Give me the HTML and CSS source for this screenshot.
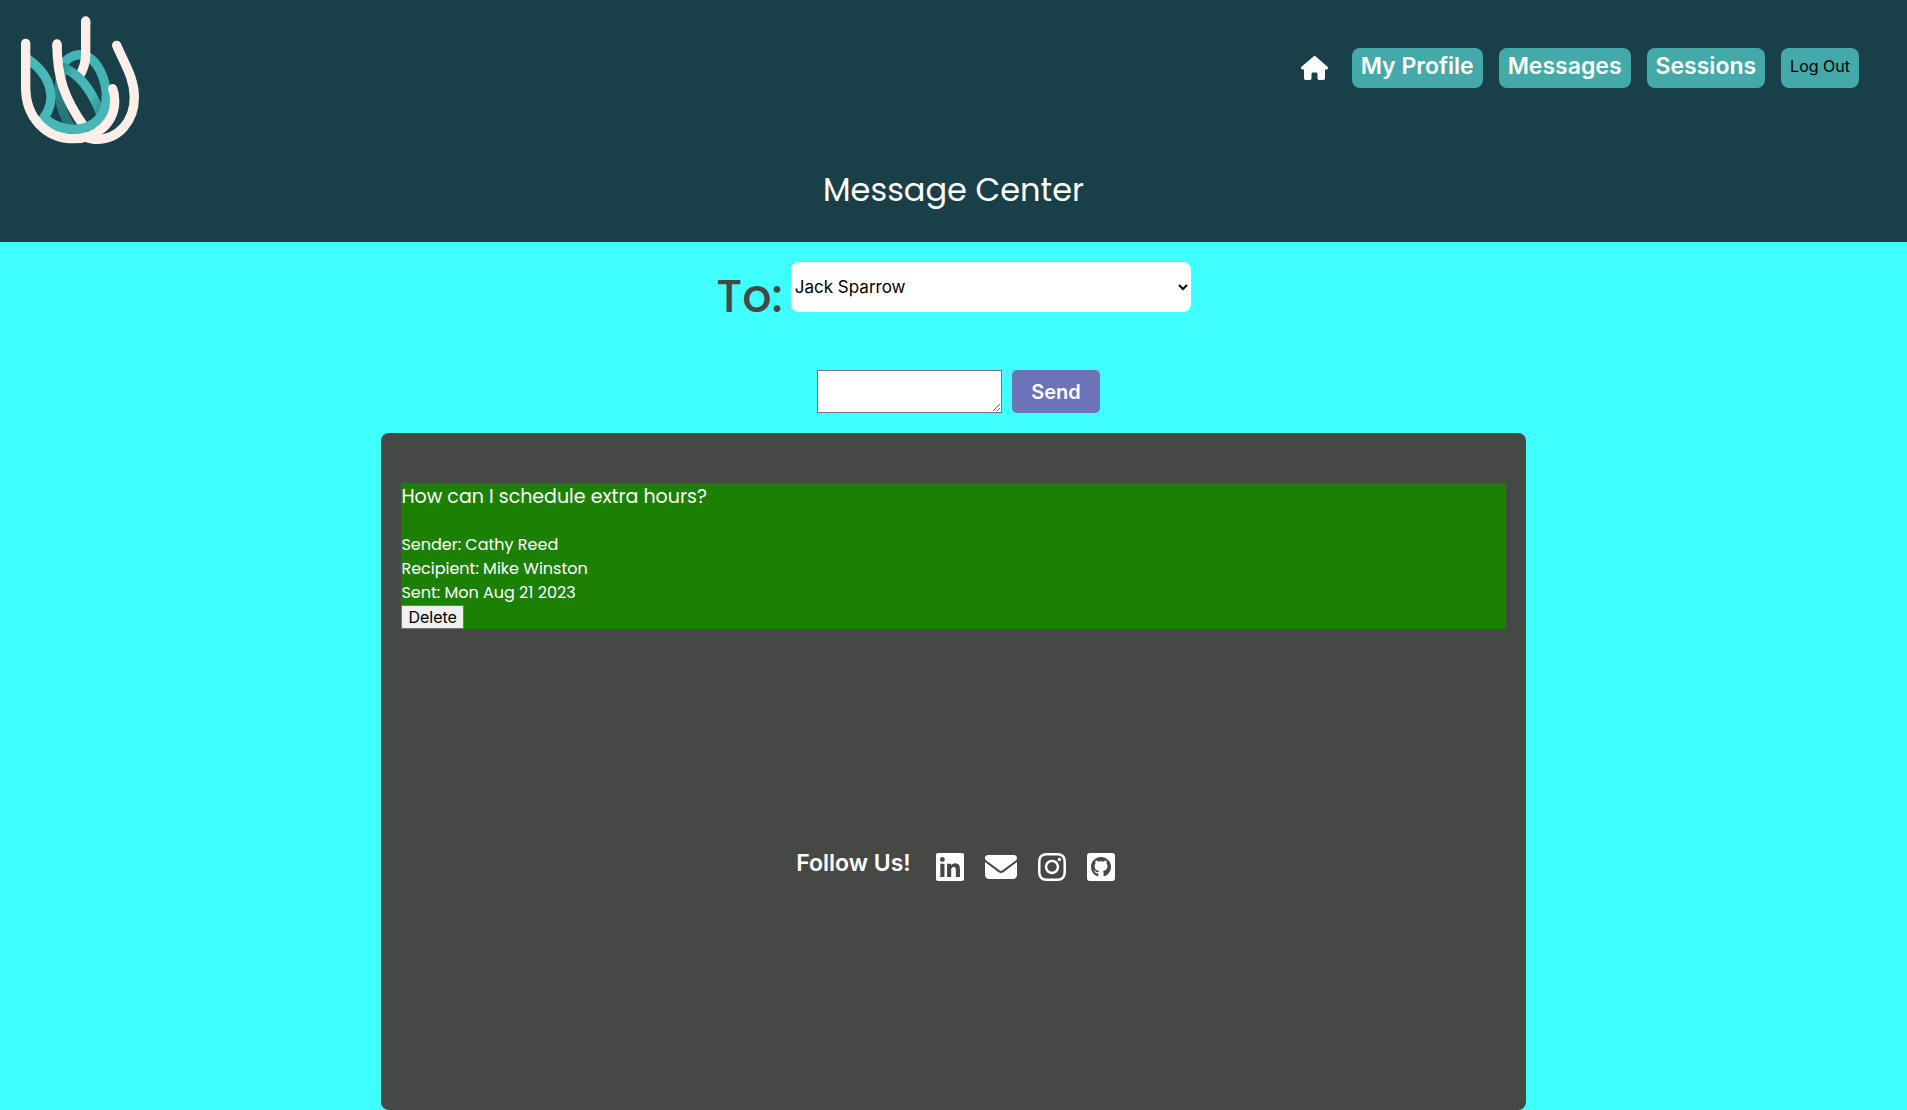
FILE: index.html
```html
<!DOCTYPE html>
<html lang="en">
<head>
<meta charset="utf-8">
<meta name="viewport" content="width=device-width, initial-scale=1">
<title>Message Center</title>
<link rel="stylesheet" href="styles.css">
</head>
<body>
<header class="header">
  <div class="topbar">
    <a href="#" class="logo" aria-label="Home page">
      <svg viewBox="0 0 480 480" fill="none" stroke-width="28">
        <defs>
          <linearGradient id="strand" x1="0" y1="0" x2="1" y2="1">
            <stop offset="0" stop-color="#2f8f92"/>
            <stop offset="0.25" stop-color="#44b5b5"/>
            <stop offset="0.7" stop-color="#46b8b7"/>
            <stop offset="1" stop-color="#2f8c90"/>
          </linearGradient>
          <linearGradient id="inner" x1="0" y1="0" x2="0" y2="1">
            <stop offset="0" stop-color="#3fa9aa"/>
            <stop offset="0.5" stop-color="#2b8085"/>
            <stop offset="1" stop-color="#257076"/>
          </linearGradient>
        </defs>
        <path d="M196 190C168 250 172 325 214 382" stroke="url(#inner)"/>
        <path d="M82 176C128 208 152 245 153 292C153 320 142 345 116 370" stroke="#47b8b7"/>
        <path d="M182 206C198 168 240 152 272 176C302 200 321 250 319 298" stroke="#44b3b3"/>
        <path d="M257 63V162C257 190 252 206 238 228" stroke="#fdefe8"/>
        <path d="M257 63V70M171 132V140" stroke="#fdefe8" stroke-linecap="round"/>
        <path d="M184 200C238 220 276 272 302 342" stroke="url(#strand)"/>
        <path d="M171 132C171 228 191 294 254 382" stroke="#fdefe8"/>
        <path d="M319 290C319 350 280 387 222 388C184 388 156 374 130 352" stroke="#46b7b6"/>
        <path d="M77 130V262C77 350 135 416 222 416C292 416 344 366 344 302C344 288 342 276 338 266" stroke="#fdefe8" stroke-linecap="round"/>
        <path d="M350 136C372 190 403 232 403 292C403 365 354 418 292 418C280 418 268 416 258 411" stroke="#fdefe8" stroke-linecap="round"/>
      </svg>
    </a>
    <nav class="nav" aria-label="Main">
      <a href="#" class="home" aria-label="Home">
        <svg viewBox="0 0 576 512" fill="currentColor"><path d="M575.800 255.500c0 18-15 32.100-32 32.100h-32l.7 160.200c0 2.700-.2 5.400-.5 8.100V472c0 22.100-17.900 40-40 40H392c-22.100 0-40-17.900-40-40V384c0-17.700-14.300-32-32-32H256c-17.700 0-32 14.300-32 32v88c0 22.100-17.900 40-40 40H104c-22.100 0-40-17.900-40-40V287.600H32c-18 0-32-14-32-32.100c0-9 3-17 10-24L266.400 8c7-7 15-8 22-8s15 2 21 7L564.800 231.500c8 7 12 15 11 24z"/></svg>
      </a>
      <a href="#" class="pill">My Profile</a>
      <a href="#" class="pill">Messages</a>
      <a href="#" class="pill">Sessions</a>
      <button type="button" class="pill pill-plain">Log Out</button>
    </nav>
  </div>
  <h1 class="title">Message Center</h1>
</header>
<main class="main">
  <form class="compose">
    <div class="row">
      <label for="to" class="to">To:</label>
      <select id="to" class="recipient"><option>Jack Sparrow</option></select>
    </div>
    <div class="row row-message">
      <textarea class="message-box" aria-label="Message"></textarea>
      <button type="button" class="send">Send</button>
    </div>
  </form>
  <section class="panel">
    <article class="message">
      <h2 class="message-text">How can I schedule extra hours?</h2>
      <p class="meta">Sender: Cathy Reed</p>
      <p class="meta">Recipient: Mike Winston</p>
      <p class="meta">Sent: Mon Aug 21 2023</p>
      <button type="button" class="delete">Delete</button>
    </article>
    <footer class="footer">
      <p class="follow">Follow Us!</p>
      <a href="#" class="social" aria-label="LinkedIn"><svg viewBox="0 0 448 512" fill="currentColor"><path d="M416 32H31.900C14.300 32 0 46.500 0 64.300v383.400C0 465.500 14.300 480 31.900 480H416c17.600 0 32-14.500 32-32.300V64.300c0-17.800-14.400-32.300-32-32.300zM135.400 416H69V202.200h66.500V416zm-33.200-243c-21.300 0-38.500-17.300-38.500-38.500S80.900 96 102.200 96c21.200 0 38.500 17.300 38.500 38.500 0 21.300-17.200 38.500-38.500 38.500zm282.100 243h-66.400V312c0-24.800-.5-56.700-34.500-56.700-34.600 0-39.900 27-39.900 54.900V416h-66.400V202.200h63.700v29.200h.9c8.900-16.800 30.600-34.500 62.900-34.500 67.200 0 79.700 44.300 79.700 101.900V416z"/></svg></a>
      <a href="#" class="social" aria-label="Email"><svg viewBox="0 0 512 512" fill="currentColor"><path d="M48 64C21.500 64 0 85.500 0 112c0 15.100 7.100 29.300 19.200 38.400L236.800 313.600c11.400 8.500 27 8.500 38.400 0L492.800 150.400c12.100-9.100 19.200-23.300 19.200-38.400c0-26.500-21.500-48-48-48H48zM0 176V384c0 35.300 28.700 64 64 64H448c35.300 0 64-28.700 64-64V176L294.400 339.200c-22.800 17.100-54 17.100-76.800 0L0 176z"/></svg></a>
      <a href="#" class="social" aria-label="Instagram"><svg viewBox="0 0 448 512" fill="currentColor"><path d="M224.100 141c-63.600 0-114.900 51.300-114.900 114.900s51.300 114.900 114.900 114.900S339 319.500 339 255.900 287.700 141 224.100 141zm0 189.600c-41.100 0-74.700-33.500-74.700-74.700s33.500-74.700 74.700-74.700 74.700 33.500 74.700 74.700-33.600 74.700-74.700 74.700zm146.400-194.300c0 14.900-12 26.800-26.800 26.800-14.900 0-26.800-12-26.800-26.800s12-26.800 26.800-26.800 26.800 12 26.800 26.800zm76.100 27.200c-1.700-35.900-9.900-67.700-36.200-93.900-26.200-26.200-58-34.400-93.900-36.200-37-2.100-147.900-2.100-184.900 0-35.800 1.700-67.600 9.900-93.900 36.100s-34.400 58-36.200 93.900c-2.100 37-2.100 147.900 0 184.900 1.700 35.900 9.900 67.700 36.200 93.900s58 34.400 93.900 36.200c37 2.100 147.900 2.100 184.900 0 35.900-1.700 67.700-9.900 93.900-36.200 26.200-26.200 34.400-58 36.200-93.900 2.100-37 2.100-147.800 0-184.800zM398.800 388c-7.800 19.600-22.900 34.700-42.600 42.600-29.500 11.700-99.500 9-132.100 9s-102.700 2.600-132.100-9c-19.600-7.800-34.700-22.900-42.600-42.600-11.700-29.500-9-99.500-9-132.100s-2.600-102.700 9-132.100c7.800-19.600 22.900-34.700 42.600-42.600 29.500-11.700 99.500-9 132.100-9s102.700-2.600 132.100 9c19.600 7.800 34.700 22.900 42.600 42.600 11.700 29.500 9 99.500 9 132.100s2.700 102.700-9 132.100z"/></svg></a>
      <a href="#" class="social" aria-label="GitHub"><svg viewBox="0 0 448 512"><rect y="32" width="448" height="448" rx="48" fill="currentColor"/><path fill="#464846" d="M224 96c-89 0-160 70-160 158 0 70 45 129 108 151 8 1 11-4 11-8v-38c-44 9-54-19-54-19-7-18-18-23-18-23-14-10 1-10 1-10 16 1 25 17 25 17 14 24 37 17 47 13 1-10 5-17 10-21-36-4-73-18-73-78 0-17 6-31 16-42-2-4-7-20 2-42 0 0 13-4 44 16 26-7 56-7 82 0 31-20 44-16 44-16 9 22 4 38 2 42 10 11 16 25 16 42 0 60-37 74-73 78 6 5 11 15 11 30v51c0 4 3 9 11 8 63-22 108-81 108-151 0-88-71-158-160-158z"/></svg></a>
    </footer>
  </section>
</main>
</body>
</html>
```
FILE: styles.css
```css
* {
  box-sizing: border-box;
}

body {
  margin: 0;
  min-height: 100vh;
  display: flex;
  flex-direction: column;
  background: #3fffff;
  font-family: Inter, "Liberation Sans", sans-serif;
}

h1, h2, p {
  margin: 0;
  font-weight: 400;
}

a {
  color: inherit;
  text-decoration: none;
}

svg {
  display: block;
}

button, select, textarea {
  font-family: inherit;
}

.header {
  background: #193f49;
  color: #fff;
  padding-bottom: 28px;
}

.topbar {
  display: flex;
  justify-content: space-between;
  align-items: flex-start;
  padding-right: 48px;
}

.logo svg {
  width: 160px;
  height: 160px;
}

.nav {
  display: flex;
  align-items: center;
  gap: 16px;
  padding-top: 48px;
}

.home {
  margin-right: 8px;
}

.home svg {
  width: 27px;
  height: 24px;
}

.pill {
  height: 40px;
  padding: 0 9px;
  border: 0;
  border-radius: 8px;
  background: #43aaa9;
  font-size: 23px;
  font-weight: 600;
  line-height: 36px;
}

.pill-plain {
  padding-bottom: 4px;
  color: #000;
  font-size: 16px;
  font-weight: 400;
}

.title {
  padding-top: 6px;
  font-family: Poppins, Inter, sans-serif;
  font-size: 32px;
  line-height: 48px;
  text-align: center;
}

.main {
  flex: 1;
  display: flex;
  flex-direction: column;
  align-items: center;
  padding-top: 20px;
}

.row {
  display: flex;
  justify-content: center;
  gap: 8px;
}

.to {
  padding-top: 10px;
  color: #464846;
  font-family: Poppins, Inter, sans-serif;
  font-size: 46px;
  font-weight: 500;
  line-height: 48px;
}

.recipient {
  width: 400px;
  height: 50px;
  border: 0;
  border-radius: 8px;
  background: #fff;
  color: #000;
  font-size: 17px;
}

.row-message {
  gap: 10px;
  padding: 50px 0 20px 10px;
}

.message-box {
  width: 185px;
  height: 43px;
  border: 1px solid #767676;
}

.send {
  width: 88px;
  border: 0;
  border-radius: 5px;
  background: #6c73b9;
  color: #fff;
  font-size: 20px;
  font-weight: 600;
}

.panel {
  flex: 1;
  width: 60%;
  padding: 50px 20px;
  border-radius: 8px;
  background: #464846;
  color: #fff;
}

.message {
  background: #1c8002;
  font-family: Poppins, Inter, sans-serif;
}

.message-text {
  padding-bottom: 22px;
  font-size: 19px;
  line-height: 28px;
}

.meta {
  font-size: 16px;
  line-height: 24px;
}

.delete {
  display: block;
  height: 24px;
  padding: 0 6px;
  border: 1px solid #767676;
  background: #efefef;
  color: #000;
  font-family: Inter, "Liberation Sans", sans-serif;
  font-size: 16px;
}

.footer {
  display: flex;
  justify-content: center;
  gap: 21px;
  padding: 222px 0 40px 4px;
}

.follow {
  padding-right: 4px;
  font-size: 23px;
  font-weight: 600;
  line-height: 24px;
}

.social svg {
  height: 32px;
}
```
